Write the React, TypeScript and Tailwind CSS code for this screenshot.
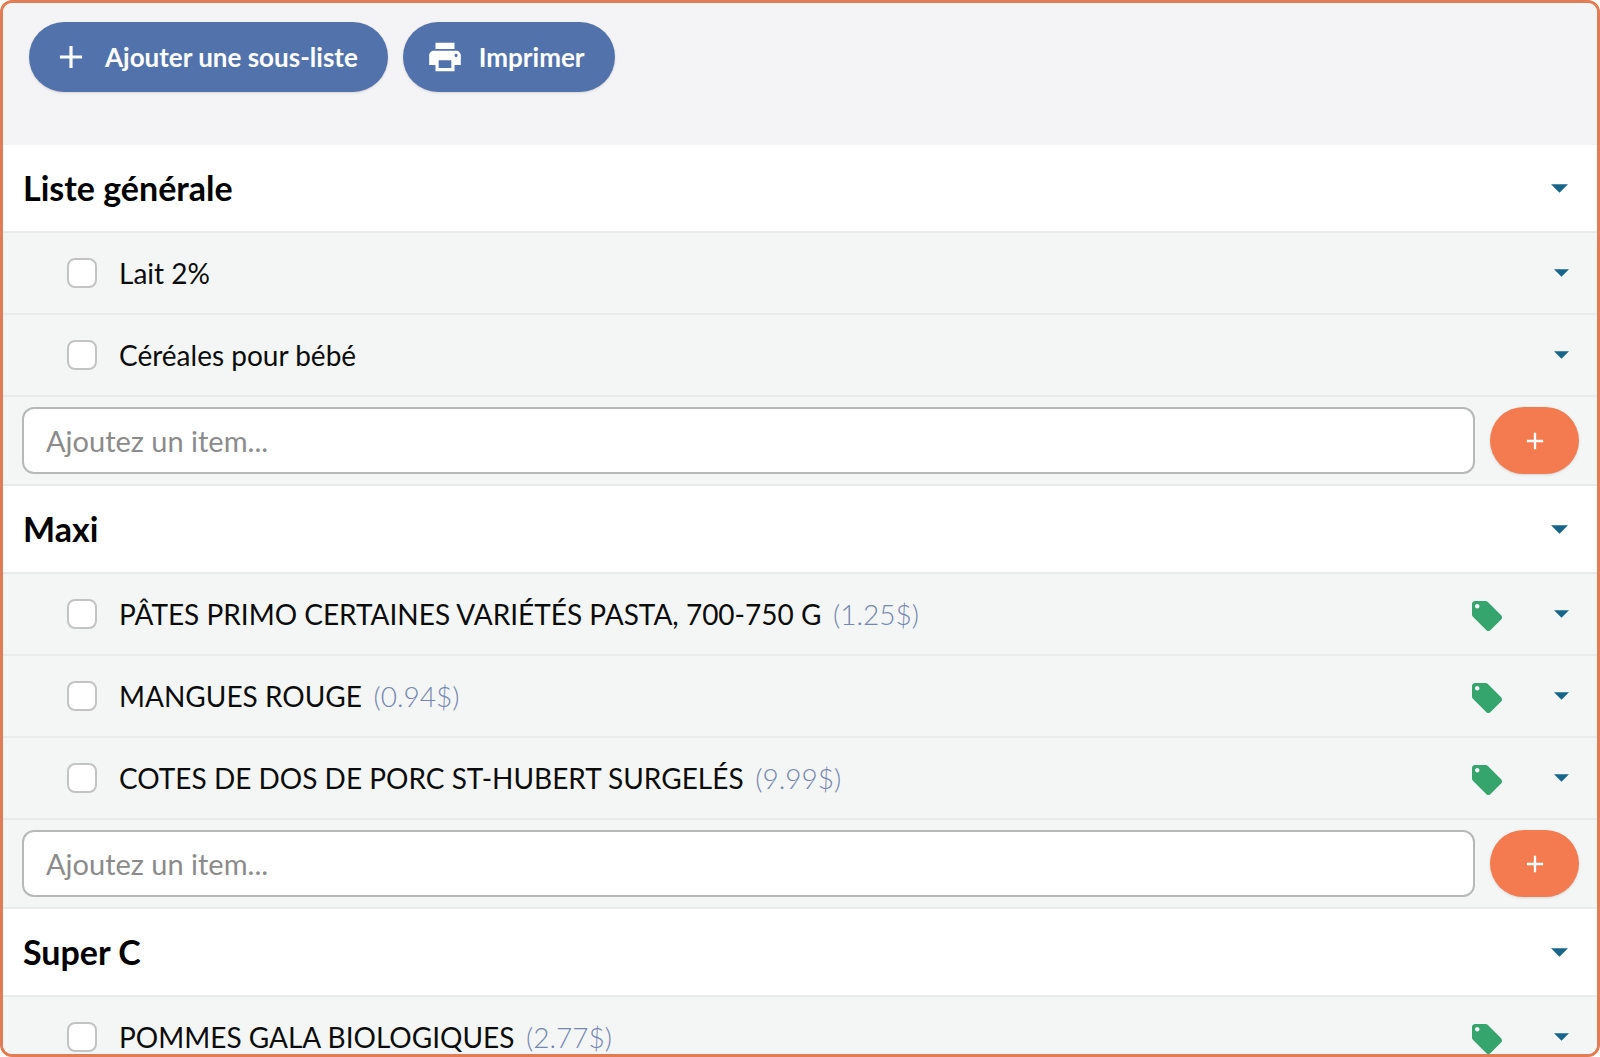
import { useState } from "react";
import { MdAdd, MdLocalOffer, MdPrint } from "react-icons/md";

type Item = { name: string; price?: string };
type Section = { title: string; items: Item[] };

const sections: Section[] = [
  {
    title: "Liste générale",
    items: [{ name: "Lait 2%" }, { name: "Céréales pour bébé" }],
  },
  {
    title: "Maxi",
    items: [
      { name: "PÂTES PRIMO CERTAINES VARIÉTÉS PASTA, 700-750 G", price: "1.25$" },
      { name: "MANGUES ROUGE", price: "0.94$" },
      { name: "COTES DE DOS DE PORC ST-HUBERT SURGELÉS", price: "9.99$" },
    ],
  },
  {
    title: "Super C",
    items: [{ name: "POMMES GALA BIOLOGIQUES", price: "2.77$" }],
  },
];

function Caret({ label, className }: { label: string; className: string }) {
  return (
    <button type="button" aria-label={label} className="flex h-10 w-10 shrink-0 items-center justify-center text-[#17658a]">
      <svg viewBox="0 0 16 8" className={className} fill="currentColor" aria-hidden="true">
        <path d="M0 0h16L8 8z" />
      </svg>
    </button>
  );
}

function ItemRow({ item, id }: { item: Item; id: string }) {
  const [checked, setChecked] = useState(false);
  return (
    <li className="flex items-center border-b-2 border-[#e8eaeb] bg-[#f4f6f6] py-5 pl-16 pr-4">
      <input
        id={id}
        type="checkbox"
        checked={checked}
        onChange={(e) => setChecked(e.target.checked)}
        className="h-[30px] w-[30px] shrink-0 appearance-none rounded-lg border-2 border-[#c3c3c3] bg-white checked:bg-[#5272ab]"
      />
      <label htmlFor={id} className="ml-[22px] flex-1 text-[28px] leading-10 text-[#0c0c0c]">
        {item.name}
        {item.price && <span className="ml-1 font-light text-[#7586b0]"> ({item.price})</span>}
      </label>
      {item.price && <MdLocalOffer className="mr-9 mt-1 h-9 w-9 shrink-0 text-[#35a56d]" />}
      <Caret label={`Options de ${item.name}`} className="h-2 w-[15px]" />
    </li>
  );
}

function ListSection({ section, index }: { section: Section; index: number }) {
  return (
    <section>
      <header className="flex items-center justify-between border-b-2 border-[#e8eaeb] bg-white py-5 pl-5 pr-[18px]">
        <h2 className="text-[34px] font-bold leading-[46px] text-black">{section.title}</h2>
        <Caret label={`Options de ${section.title}`} className="h-[9px] w-[17px]" />
      </header>
      <ul>
        {section.items.map((item, i) => (
          <ItemRow key={item.name} item={item} id={`item-${index}-${i}`} />
        ))}
      </ul>
      <form
        onSubmit={(e) => e.preventDefault()}
        className="flex gap-[15px] border-b-2 border-[#e8eaeb] bg-[#f4f6f6] pb-[10px] pl-[19px] pr-[18px] pt-[10px]"
      >
        <input
          type="text"
          aria-label={`Ajouter un item à ${section.title}`}
          placeholder="Ajoutez un item..."
          className="h-[67px] min-w-0 flex-1 rounded-xl border-2 border-[#b7b9b9] bg-white px-[22px] text-[29px] text-black placeholder:text-[#8b8b8b]"
        />
        <button
          type="submit"
          aria-label="Ajouter"
          className="flex h-[67px] w-[89px] items-center justify-center rounded-full bg-[#f37b4f] text-white shadow-sm"
        >
          <MdAdd className="h-7 w-7" />
        </button>
      </form>
    </section>
  );
}

const pill =
  "flex h-[70px] items-center gap-[15px] rounded-full bg-[#5272ab] pl-[23px] pr-[30px] text-[26px] font-bold text-white shadow-sm";

export default function App() {
  return (
    <main className="h-screen overflow-hidden rounded-xl border-3 border-[#e27c55] bg-[#f4f6f6] font-['Lato',sans-serif]">
      <div className="flex gap-[15px] bg-[#f4f4f6] pb-[53px] pl-[26px] pt-[19px]">
        <button type="button" className={pill}>
          <MdAdd className="h-[38px] w-[38px]" />
          Ajouter une sous-liste
        </button>
        <button type="button" className={pill}>
          <MdPrint className="h-[38px] w-[38px]" />
          Imprimer
        </button>
      </div>
      {sections.map((section, i) => (
        <ListSection key={section.title} section={section} index={i} />
      ))}
    </main>
  );
}
